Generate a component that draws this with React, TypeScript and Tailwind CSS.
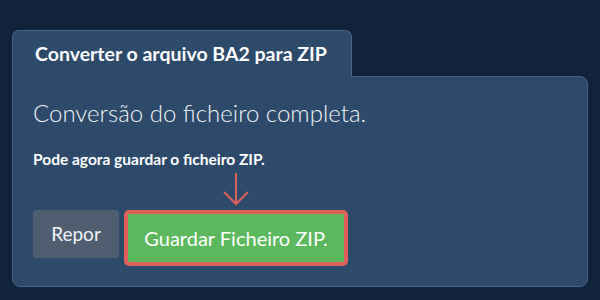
export default function App() {
  return (
    <div
      className="h-[300px] w-[600px] bg-[#11233a] pl-3 pr-3 pt-[30px]"
      style={{ fontFamily: "Lato, 'Open Sans', sans-serif" }}
    >
      <div className="relative z-10 -mb-px flex h-[47px] w-[340px] items-center rounded-t-[7px] border border-b-0 border-[#4a6585] bg-[#2d4a6a] pl-[22px]">
        <h1 className="text-[19.5px] font-bold text-white">Converter o arquivo BA2 para ZIP</h1>
      </div>
      <div className="h-[211px] rounded-b-[8px] rounded-tr-[8px] border border-[#4a6585] bg-[#2d4a6a] px-5 pt-[20px]">
        <div className="text-[24px] font-light leading-[32px] text-[#f1f3f6]">Conversão do ficheiro completa.</div>
        <div className="mt-[20px] text-[15.5px] font-bold leading-[20px] text-white">
          Pode agora guardar o ficheiro ZIP.
        </div>
        <div className="mt-[41px] flex items-start gap-[5px]">
          <button className="h-12 w-[86px] rounded-[4px] bg-[#4f5e70] text-[19px] text-[#f1f3f6]">
            Repor
          </button>
          <div className="relative">
            <svg
              width="28"
              height="34"
              viewBox="0 0 28 34"
              className="absolute bottom-full left-[98px] mb-[4px]"
            >
              <path d="M14 1 V32 M2 20 L14 32 L26 20" fill="none" stroke="#e0605a" strokeWidth="2" />
            </svg>
            <button className="h-14 w-[224px] rounded-[5px] border-4 border-[#e0605a] bg-[#5cb85c] text-[20px] text-white">
              Guardar Ficheiro ZIP.
            </button>
          </div>
        </div>
      </div>
    </div>
  );
}
